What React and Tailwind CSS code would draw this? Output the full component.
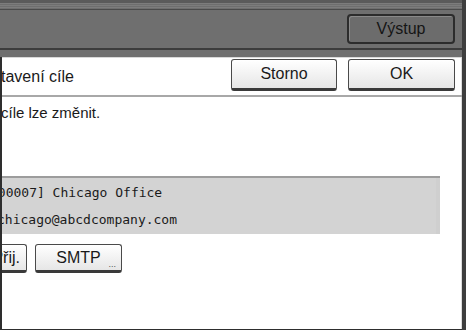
import React from 'react';

// Panel tlačítko — světlé
const LightButton = ({ className = '', children }) => (
  <div
    className={`flex items-center justify-center rounded-[3px] border border-[#4a4a4a] border-b-[3px] border-b-[#3a3a3a] bg-gradient-to-b from-[#ffffff] to-[#e6e6e6] text-[#1a1a1a] shadow-[inset_0_1px_0_#ffffff] ${className}`}
  >
    {children}
  </div>
);

export default function App() {
  const sans = { fontFamily: '"Liberation Sans", Arial, sans-serif' };
  const mono = { fontFamily: '"DejaVu Sans Mono", "Liberation Mono", monospace' };

  return (
    <div className="flex h-[330px] w-[466px] flex-col overflow-hidden bg-[#3e3e3e]" style={sans}>
      {/* horní lišta */}
      <div className="mr-[4px] flex flex-col">
        <div className="h-[3px] bg-[#5a5a5a]" />
        <div className="h-[6px] bg-[repeating-linear-gradient(180deg,#7c7c7c_0px,#7c7c7c_1px,#6e6e6e_1px,#6e6e6e_2px)]" />
        <div className="h-[1px] bg-[#4a4a4a]" />
        <div className="flex h-[38px] justify-end bg-[#6f6f6f] pr-[7px] pt-[4px]">
          <div className="flex h-[30px] w-[108px] items-center justify-center rounded-[4px] border-2 border-[#2c2c2c] bg-[#6c6c6c] text-[16px] text-[#151515] shadow-[inset_1px_1px_0_#8a8a8a]">
            Výstup
          </div>
        </div>
        <div className="h-[2px] bg-[#3c3c3c]" />
        <div className="h-[7px] bg-[#6f6f6f]" />
      </div>

      {/* bílý panel */}
      <div className="mr-[4px] flex flex-1 flex-col overflow-hidden border-b border-l-2 border-[#2e2e2e] bg-white shadow-[inset_-1px_0_0_#dcdcdc]">
        <div className="flex h-[40px] shrink-0 items-start border-b-2 border-t border-b-[#a8a8a8] border-t-[#d8d8d8] pr-[7px] pt-[1px]">
          <div className="ml-[-9px] flex-1 self-center whitespace-nowrap text-[16px] text-[#1a1a1a]">
            stavení cíle
          </div>
          <LightButton className="h-[32px] w-[106px] text-[16px]">Storno</LightButton>
          <LightButton className="ml-[11px] h-[32px] w-[107px] text-[16px]">OK</LightButton>
        </div>

        <div className="ml-[-1px] mt-[7px] whitespace-nowrap text-[15px] leading-[18px] text-[#1a1a1a]">
          cíle lze změnit.
        </div>

        <div className="mt-[54px] flex h-[58px] w-[438px] shrink-0 flex-col overflow-hidden border-t-2 border-[#9c9c9c] bg-[#d3d3d3] text-[13px] text-[#1a1a1a] shadow-[inset_-4px_0_0_#cfcfcf]" style={mono}>
          <div className="ml-[-12px] mt-[2px] h-[27px] whitespace-nowrap leading-[26px]">[00007] Chicago Office</div>
          <div className="ml-[-5px] h-[26px] whitespace-nowrap leading-[26px]">chicago@abcdcompany.com</div>
        </div>

        <div className="mt-[10px] flex h-[29px] shrink-0">
          <LightButton className="ml-[-62px] h-[29px] w-[87px] justify-end pr-[6px] text-[16px]">Přij.</LightButton>
          <LightButton className="relative ml-[8px] h-[29px] w-[87px] text-[16px]">
            SMTP
            <span className="absolute bottom-[1px] right-[5px] text-[9px] leading-none text-[#555]">...</span>
          </LightButton>
        </div>
      </div>
    </div>
  );
}
